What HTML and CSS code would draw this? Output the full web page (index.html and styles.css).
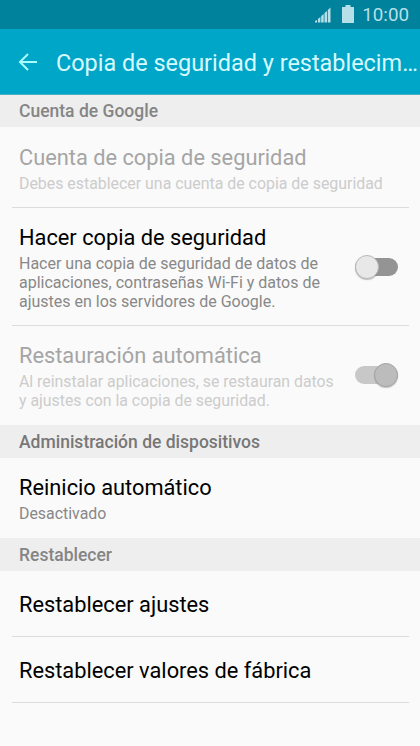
FILE: index.html
```html
<!DOCTYPE html>
<html lang="es">
<head>
<meta charset="utf-8">
<title>Copia de seguridad y restablecimiento</title>
<link rel="stylesheet" href="styles.css">
</head>
<body>
<div class="status">
  <svg class="signal" width="16" height="16" viewBox="0 0 16 16"><path d="M0 14l2-1v2.500H0zM2.900 12l2.500-2v5.500H2.900zM6.200 9l2.500-2v8.500H6.200zM9.500 6l2.500-2v11.500H9.500zM12.800 3L15.500.5v15h-2.700z"/></svg>
  <svg class="battery" width="12" height="18" viewBox="0 0 12 18"><path d="M3.500 0h5v2H12v16H0V2h3.500z"/></svg>
  <span class="clock">10:00</span>
</div>
<header class="bar">
  <svg class="back" width="20" height="18" viewBox="0 0 20 18"><path d="M19 9H2M10 1L2 9l8 8"/></svg>
  <h1>Copia de seguridad y restablecim…</h1>
</header>
<main>
  <h2 class="section first">Cuenta de Google</h2>
  <div class="row account disabled"><div class="text"><div class="title">Cuenta de copia de seguridad</div><div class="sub">Debes establecer una cuenta de copia de seguridad</div></div></div>
  <div class="row backup"><div class="text"><div class="title">Hacer copia de seguridad</div><div class="sub">Hacer una copia de seguridad de datos de<br>aplicaciones, contraseñas Wi-Fi y datos de<br>ajustes en los servidores de Google.</div></div><div class="switch"><i></i></div></div>
  <div class="row restore disabled"><div class="text"><div class="title">Restauración automática</div><div class="sub">Al reinstalar aplicaciones, se restauran datos<br>y ajustes con la copia de seguridad.</div></div><div class="switch on"><i></i></div></div>
  <h2 class="section devices">Administración de dispositivos</h2>
  <div class="row reboot"><div class="text"><div class="title">Reinicio automático</div><div class="sub">Desactivado</div></div></div>
  <h2 class="section">Restablecer</h2>
  <div class="row single"><div class="title">Restablecer ajustes</div></div>
  <div class="row single"><div class="title">Restablecer valores de fábrica</div></div>
</main>
</body>
</html>
```
FILE: styles.css
```css
* { box-sizing: border-box; }
body { margin: 0; width: 420px; height: 746px; overflow: hidden; background: #fafafa; font-family: Roboto, sans-serif; color: #000; }
.status { height: 29px; background: #00819c; display: flex; align-items: center; justify-content: flex-end; padding-right: 11px; }
.status svg { fill: #b7dfe8; }
.battery { margin: 0 0 1px 11px; }
.clock { margin-left: 8px; font-size: 18.8px; color: #b7dfe8; line-height: 30px; padding-top: 1px; }
.bar { height: 66px; background: #00a6c8; border-bottom: 1px solid #4bb0c5; display: flex; align-items: center; padding-left: 18px; }
.back { fill: none; stroke: #a5ffff; stroke-width: 2; }
h1 { margin: 3px 0 0 18px; font-size: 23.45px; font-weight: 400; line-height: 30px; color: #d8faff; white-space: nowrap; }
.section { margin: 0; height: 33px; padding-left: 19px; background: #eee; color: #858585; font-size: 17.5px; font-weight: 500; line-height: 34px; }
.first { height: 32px; line-height: 33px; }
.devices { color: #777; }
.row { margin: 0 11px 0 12px; padding: 0 11px 0 7px; border-bottom: 1px solid #dcdcdc; display: flex; justify-content: space-between; align-items: center; white-space: nowrap; }
.text { margin-top: 2px; }
.title { font-size: 21.8px; line-height: 28px; }
.sub { margin-top: 2px; font-size: 15.9px; line-height: 19.300px; color: #888; }
.disabled .title { color: #a5a5a5; }
.disabled .sub { color: #ccc; }
.account { height: 81px; }
.account .text { margin-top: 3px; }
.backup { height: 118px; }
.backup .sub { font-size: 16px; }
.restore { height: 99px; border: 0; }
.restore .text { margin-top: 1px; }
.restore .sub { font-size: 15.850px; }
.reboot { height: 80px; border: 0; }
.single { height: 66px; padding-top: 3px; }
.switch { width: 43px; height: 18px; border-radius: 9px; background: #949494; display: flex; align-items: center; }
.switch i { width: 24px; height: 24px; flex: none; border-radius: 50%; background: #e8e8e8; border: 1px solid #b8b8b8; box-shadow: 0 1px 1px #8888; }
.switch.on { margin-bottom: 2px; background: #c8c8c8; justify-content: flex-end; }
.switch.on i { background: #bcbcbc; border-color: #a5a5a5; }
```
